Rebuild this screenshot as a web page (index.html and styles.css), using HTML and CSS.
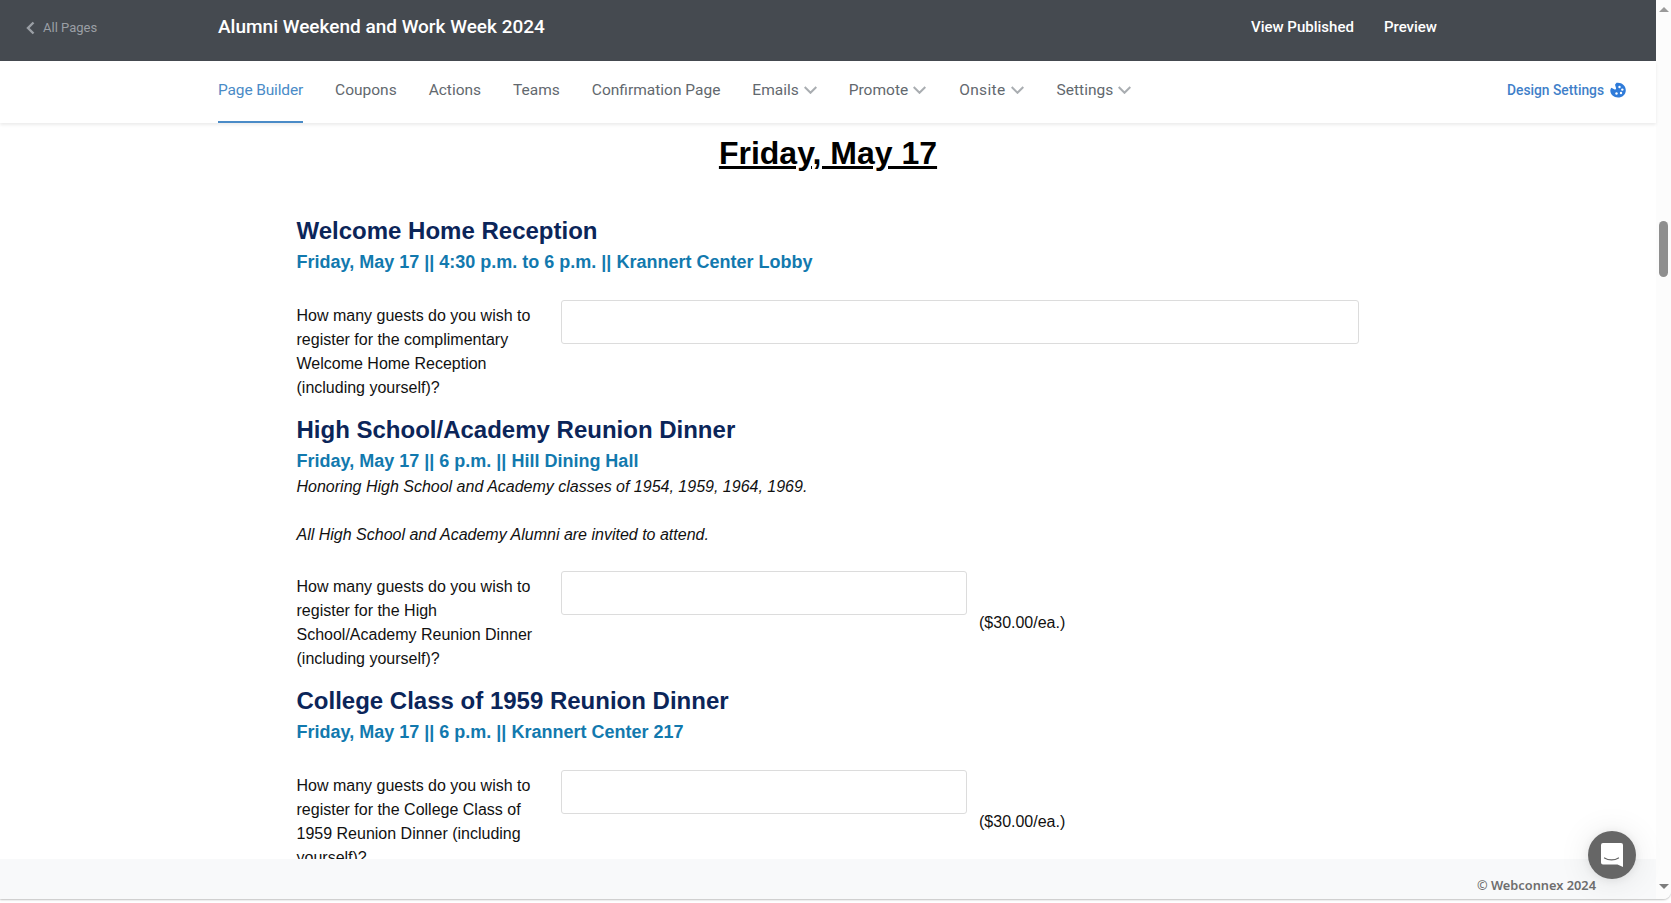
FILE: index.html
```html
<!DOCTYPE html>
<html lang="en">
<head>
<meta charset="UTF-8">
<title>Alumni Weekend and Work Week 2024</title>
<link rel="stylesheet" href="styles.css">
</head>
<body>
<div class="app">
  <div class="window">
    <header class="topbar">
      <a class="back-link" href="#">
        <svg class="back-icon" viewBox="0 0 9 14" width="9" height="14"><path d="M7.500 1.500 2 7l5.500 5.500" fill="none" stroke="currentColor" stroke-width="2.400"/></svg>
        All Pages
      </a>
      <div class="page-title">Alumni Weekend and Work Week 2024</div>
      <div class="top-actions">
        <a href="#">View Published</a>
        <a href="#">Preview</a>
      </div>
    </header>

    <nav class="subnav">
      <a class="nav-item active" href="#">Page Builder</a>
      <a class="nav-item" href="#">Coupons</a>
      <a class="nav-item" href="#">Actions</a>
      <a class="nav-item" href="#">Teams</a>
      <a class="nav-item" href="#">Confirmation Page</a>
      <a class="nav-item" href="#">Emails <svg class="caret" viewBox="0 0 13 8" width="13" height="8"><path d="M.7 1 6.500 6.800 12.300 1" fill="none" stroke="currentColor" stroke-width="2"/></svg></a>
      <a class="nav-item" href="#">Promote <svg class="caret" viewBox="0 0 13 8" width="13" height="8"><path d="M.7 1 6.500 6.800 12.300 1" fill="none" stroke="currentColor" stroke-width="2"/></svg></a>
      <a class="nav-item onsite" href="#">Onsite <svg class="caret" viewBox="0 0 13 8" width="13" height="8"><path d="M.7 1 6.500 6.800 12.300 1" fill="none" stroke="currentColor" stroke-width="2"/></svg></a>
      <a class="nav-item" href="#">Settings <svg class="caret" viewBox="0 0 13 8" width="13" height="8"><path d="M.7 1 6.500 6.800 12.300 1" fill="none" stroke="currentColor" stroke-width="2"/></svg></a>
      <a class="design-link" href="#">
        Design Settings
        <svg viewBox="0 0 16 16" width="16" height="16"><path d="M6.500.8C11.500 0 15.800 3.600 15.800 8.200c0 4.400-3.600 7.400-7.800 7.400S.3 12.400.3 8.600c0-1 .4-2 1.100-2.800l3.200 1.600c.8.4 1.800-.4 1.400-1.400L5 2.800Z" fill="#2f7bd9"/><circle cx="9.500" cy="5" r="1.200" fill="#fff"/><circle cx="12.300" cy="7.600" r="1.200" fill="#fff"/><circle cx="11" cy="11" r="1.200" fill="#fff"/><circle cx="6.500" cy="11.500" r="1.200" fill="#fff"/></svg>
      </a>
    </nav>

    <main class="content">
      <h1 class="day-title">Friday, May 17</h1>

      <div class="events">
        <h3 class="event-title">Welcome Home Reception</h3>
        <div class="event-info">Friday, May 17 || 4:30 p.m. to 6 p.m. || Krannert Center Lobby</div>
        <div class="field">
          <label class="field-label">How many guests do you wish to register for the complimentary Welcome Home Reception (including yourself)?</label>
          <input class="field-input wide" type="text">
        </div>

        <h3 class="event-title">High School/Academy Reunion Dinner</h3>
        <div class="event-info">Friday, May 17 || 6 p.m. || Hill Dining Hall</div>
        <p class="event-note">Honoring High School and Academy classes of 1954, 1959, 1964, 1969.</p>
        <p class="event-note spaced">All High School and Academy Alumni are invited to attend.</p>
        <div class="field">
          <label class="field-label">How many guests do you wish to register for the High School/Academy Reunion Dinner (including yourself)?</label>
          <input class="field-input" type="text">
          <span class="price">($30.00/ea.)</span>
        </div>

        <h3 class="event-title">College Class of 1959 Reunion Dinner</h3>
        <div class="event-info">Friday, May 17 || 6 p.m. || Krannert Center 217</div>
        <div class="field">
          <label class="field-label">How many guests do you wish to register for the College Class of 1959 Reunion Dinner (including yourself)?</label>
          <input class="field-input" type="text">
          <span class="price">($30.00/ea.)</span>
        </div>
      </div>
    </main>

    <footer class="footer">© Webconnex 2024</footer>
  </div>

  <div class="scrollbar">
    <span class="arrow-up"></span>
    <span class="thumb"></span>
    <span class="arrow-down"></span>
  </div>

  <div class="chat-button">
    <svg viewBox="0 0 22 24" width="22" height="24"><path d="M2 0h18a2 2 0 0 1 2 2v22l-5.500-2.500H2a2 2 0 0 1-2-2V2a2 2 0 0 1 2-2Z" fill="#fff"/><path d="M3.500 15c4 2.600 10 2.600 14 0" fill="none" stroke="#666" stroke-width="1.200" stroke-linecap="round"/></svg>
  </div>
</div>
</body>
</html>
```

FILE: styles.css
```css
* {
  box-sizing: border-box;
}

html, body {
  height: 100%;
}

body {
  margin: 0;
  background-color: #fff;
  font-family: "Liberation Sans", Arial, sans-serif;
  overflow: hidden;
}

a {
  text-decoration: none;
}

.app {
  position: relative;
  display: flex;
  height: 899px;
  border-bottom-right-radius: 8px;
  box-shadow: 0 1px 2px rgba(0, 0, 0, 0.25);
}

.window {
  flex: 1;
  min-width: 0;
  display: flex;
  flex-direction: column;
}

/* top bar */
.topbar {
  display: flex;
  align-items: center;
  flex: 0 0 61px;
  padding-bottom: 9px;
  background-color: #454a50;
  font-family: Roboto, sans-serif;
}

.back-link {
  display: flex;
  align-items: center;
  gap: 8px;
  width: 218px;
  padding: 3px 0 0 26px;
  color: #9a9fa5;
  font-size: 13px;
}

.page-title {
  color: #fff;
  font-size: 19px;
  font-weight: 500;
}

.top-actions {
  display: flex;
  gap: 30px;
  margin-left: auto;
  padding: 1px 219px 0 0;
}

.top-actions a {
  color: #fff;
  font-size: 15px;
  font-weight: 500;
}

/* sub navigation */
.subnav {
  position: relative;
  z-index: 1;
  display: flex;
  align-items: stretch;
  flex: 0 0 62px;
  gap: 32px;
  padding: 0 30px 0 218px;
  background-color: #fff;
  box-shadow: 0 2px 3px rgba(0, 0, 0, 0.08);
  font-family: Roboto, sans-serif;
}

.nav-item {
  display: flex;
  align-items: center;
  gap: 5px;
  padding-bottom: 3px;
  border-bottom: 2px solid transparent;
  color: #62686e;
  font-size: 15.500px;
}

.nav-item.active {
  color: #4a8bc7;
  border-bottom-color: #4a8bc7;
  letter-spacing: -0.15px;
}

.nav-item.onsite {
  margin: 0 1px;
  letter-spacing: 0.35px;
}

.caret {
  color: #a9adb1;
}

.design-link {
  display: flex;
  align-items: center;
  gap: 6px;
  margin-left: auto;
  padding-bottom: 4px;
  color: #3f7fc9;
  font-size: 13.800px;
  font-weight: 500;
}

/* form content */
.content {
  flex: 1;
  min-height: 0;
  overflow: hidden;
  color: #111;
  font-size: 16px;
}

.day-title {
  margin: 11px 0 0;
  color: #000;
  font-size: 32px;
  line-height: 38px;
  text-align: center;
  text-decoration: underline;
}

.events {
  padding: 44px 0 0 296.500px;
}

.event-title {
  margin: 0;
  color: #0b2559;
  font-size: 24px;
  line-height: 30px;
}

.event-info {
  margin-top: 1px;
  color: #1279ae;
  font-size: 18px;
  font-weight: bold;
  line-height: 30px;
}

.event-note {
  margin: -1px 0 0;
  font-size: 16px;
  font-style: italic;
  line-height: 24px;
}

.event-note.spaced {
  margin: 24px 0 24px;
}

.field {
  display: flex;
  align-items: flex-start;
  margin: 23px 0 15px;
}

.field-label {
  flex: 0 0 264.500px;
  padding: 4px 15px 0 0;
  line-height: 24px;
}

.field-input {
  flex: 0 0 406px;
  height: 44px;
  border: 1px solid #dcdcdc;
  border-radius: 3px;
  background-color: #fff;
}

.field-input.wide {
  flex-basis: 798px;
}

.price {
  margin: 40px 0 0 12px;
  line-height: 24px;
}

/* footer */
.footer {
  position: relative;
  z-index: 1;
  flex: 0 0 40px;
  padding: 18px 60px 0 0;
  background-color: #f8f9fa;
  color: #6e6e6e;
  font-family: "Noto Sans", sans-serif;
  font-size: 12.800px;
  font-weight: 600;
  line-height: 16px;
  text-align: right;
}

/* scrollbar */
.scrollbar {
  display: flex;
  flex-direction: column;
  align-items: center;
  flex: 0 0 15px;
  border-bottom-right-radius: 8px;
  background-color: #fcfcfc;
}

.arrow-up,
.arrow-down {
  width: 0;
  height: 0;
  border-left: 5px solid transparent;
  border-right: 5px solid transparent;
}

.arrow-up {
  margin-top: 7px;
  border-bottom: 5px solid #9a9a9a;
}

.arrow-down {
  margin-top: auto;
  margin-bottom: 10px;
  border-top: 5px solid #7d7d7d;
}

.thumb {
  width: 9px;
  height: 56px;
  margin-top: 209px;
  border-radius: 5px;
  background-color: #8f8f8f;
}

/* chat launcher */
.chat-button {
  position: absolute;
  left: 1588px;
  top: 831px;
  z-index: 2;
  display: flex;
  align-items: center;
  justify-content: center;
  width: 48px;
  height: 48px;
  border-radius: 50%;
  background-color: #666;
  box-shadow: 0 1px 8px rgba(0, 0, 0, 0.08), 0 2px 32px rgba(0, 0, 0, 0.1);
}
```
